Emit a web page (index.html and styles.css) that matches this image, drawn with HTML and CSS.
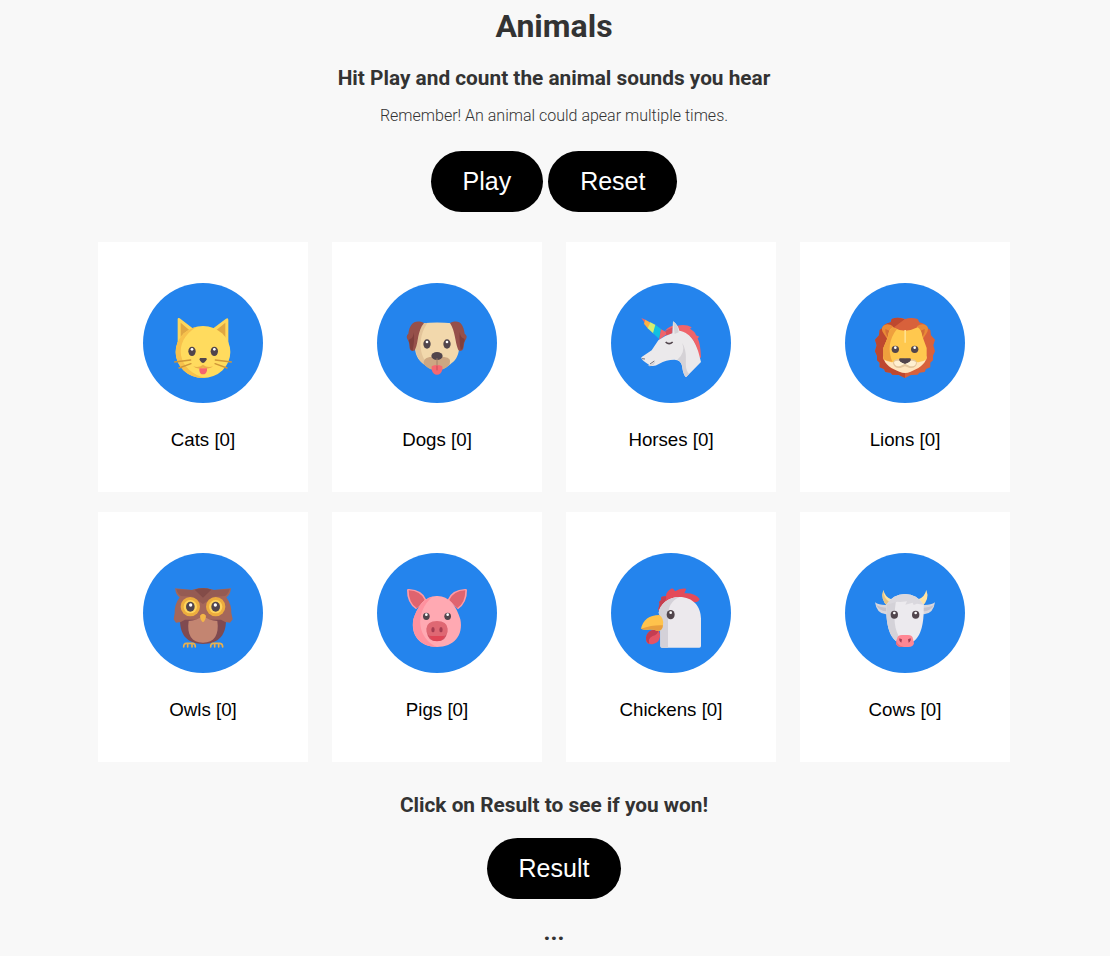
FILE: index.html
```html
<!DOCTYPE html>
<html lang="en">
<head>
<meta charset="utf-8">
<title>Animals</title>
<link rel="stylesheet" href="styles.css">
</head>
<body>
<main class="game">
  <h1 class="title">Animals</h1>
  <h2 class="lead">Hit Play and count the animal sounds you hear</h2>
  <p class="hint">Remember! An animal could apear multiple times.</p>
  <div class="actions">
    <button class="btn">Play</button>
    <button class="btn">Reset</button>
  </div>
  <section class="cards">
    <article class="card">
      <div class="avatar"><svg class="icon" viewBox="0 0 240 240">
        <path fill="#fdd65b" d="M44 130V49q0-6 6-3l41 31 60-1 38-29q7-4 7 4v79z"/>
        <path fill="#e0a742" d="M53 115V59l30 26zM187 115V59l-31 26z"/>
        <ellipse cx="120" cy="147" rx="82" ry="78" fill="#ffdb5e"/>
        <path fill="#f7c14c" d="M101 71C64 80 38 110 38 147c0 42 36 78 82 78h10C42 206 26 115 101 71z"/>
        <path fill="#ebad49" d="M91 190q17 5 29-5 12 10 30 5-8 10-30 4-21 6-29-4z"/>
        <path fill="#f7656e" d="M109 196h23v7q-3 11-12 11t-11-11z"/>
        <path fill="#51454c" d="M111 165h19q4 4-2 9-4 6-8 6t-8-6q-5-5-1-9z"/>
        <g stroke="#cf9638" stroke-width="4" stroke-linecap="round"><path d="M35 177l48-6M48 195l36-13M205 177l-48-6M192 195l-36-13"/></g>
        <g fill="#51454c"><ellipse cx="87" cy="145" rx="11" ry="14"/><ellipse cx="154" cy="145" rx="11" ry="14"/></g>
        <g fill="#fff"><circle cx="87" cy="139" r="4"/><circle cx="154" cy="139" r="4"/></g>
      </svg></div>
      <h3 class="name">Cats [0]</h3>
    </article>
    <article class="card">
      <div class="avatar"><svg class="icon" viewBox="0 0 240 240">
        <path fill="#f2d8ac" d="M76 61q44-5 89 0l22 45c2 48-6 64-31 81-20 18-52 18-71 0-26-18-32-32-32-75z"/>
        <path fill="#e3c49a" d="M91 60H77L54 105c-2 45 8 70 34 84l20 8C64 170 60 105 91 60z"/>
        <path fill="#96504a" d="M81 60c-28-12-43 3-47 32-6 5-6 10-2 18 6 7 5 22 7 29 4 7 15 6 16-1 10-20 5-53 26-78zM159 60c28-12 40 3 44 32 8 6 7 11 3 18-6 8-5 23-8 29-4 7-13 6-15 0-9-23-8-54-24-79z"/>
        <path fill="#803f3c" d="M38 108q11 0 12-20 4 20-3 55-7 0-8-8 0-14-4-22zM202 107q-11-1-14-20-2 22 3 54 6 0 7-8 0-14 5-20z"/>
        <path fill="#cda782" d="M81 184q-5-18 17-22h44q23 3 16 22c-20 25-57 25-77 0z"/>
        <path fill="#f66870" d="M104 190q16-8 32 0v10q-4 15-16 15t-16-15z"/>
        <path stroke="#c54d59" stroke-width="3" d="M120 189v13"/>
        <ellipse cx="120" cy="159" rx="17" ry="12" fill="#51454c"/><path d="M120 166v22" stroke="#a2806a" stroke-width="3"/>
        <g fill="#51454c"><ellipse cx="90" cy="123" rx="11" ry="14"/><ellipse cx="150" cy="123" rx="11" ry="14"/></g>
        <g fill="#fff"><circle cx="90" cy="117" r="4"/><circle cx="150" cy="117" r="4"/></g>
      </svg></div>
      <h3 class="name">Dogs [0]</h3>
    </article>
    <article class="card">
      <div class="avatar"><svg class="icon" viewBox="0 0 240 240">
        <path fill="#ef646b" d="M31 45l14 6-3 10z"/>
        <path fill="#ffb044" d="M43 50l16 9-7 19-13-16z"/>
        <path fill="#d6ed70" d="M58 58l16 8-6 26-18-16z"/>
        <path fill="#12bfe1" d="M73 65l18 14-7 28-18-16z"/>
        <path fill="#ef646b" d="M90 79l22 11-28 21z"/>
        <path fill="#ef646b" d="M101 84q17-18 38-16 25-6 43 5l-5 4q17 10 18 20l10 4-5 5q9 19 10 58l-24-2-53-90z"/>
        <path fill="#d94e5a" d="M104 84l21-11v18l-19 8zM145 84q48 9 58 72l-21-2z"/>
        <path fill="#ebe9eb" d="M126 55q15 10 19 28c38 6 55 45 65 94l-45 46q-9-8-12-34-3-18-23-19-25 0-45 12-14 9-27 6l-13-9q-14-7-14-16l31-21 20-30q21-15 42-21z"/>
        <path fill="#d5d2d6" d="M126 55q14 9 17 33l-12 5zM154 120q10 30-15 50 13 5 15 22 3 23 11 31l9-10c-20-26 2-52-20-93zM48 187q8 3 25-12-2 14-17 15z"/>
        <path d="M104 117q10 10 21 0" fill="none" stroke="#51454c" stroke-width="5"/>
        <path d="M33 167l9 1M57 183l13-9" stroke="#746f78" stroke-width="3"/>
      </svg></div>
      <h3 class="name">Horses [0]</h3>
    </article>
    <article class="card">
      <div class="avatar"><svg class="icon" viewBox="0 0 240 240">
        <path fill="#d8613b" d="M80 48q22-8 40 0 18-6 38 0l5 10q21 5 26 18l7 5 2 16 12 13-5 17 5 18-6 13v14l-8 7v14l-13 5-4 9-16 2-5 6-20 1-18 9-18-9-20-1-5-6-16-2-4-9-13-5v-14l-8-7V158l-6-13 5-18-5-17 12-13 2-16 7-5q5-13 26-18z"/>
        <path fill="#be482f" d="M119 49q-21-9-39-1l-3 10q-21 5-26 18l-7 5-2 16-12 13 5 17-5 18 6 13v14l8 7v14l13 5 4 9 16 2 5 6 20 1 18 9V203l-53-30 17-98z"/>
        <path fill="#e98a37" d="M84 70c-18-15-43-2-29 20l14 22zM156 70c18-15 43-2 29 20l-14 22z"/>
        <path fill="#d36c35" d="M77 85l-16-7q-1 16 10 25zM163 85l16-7q1 16-10 25z"/>
        <path fill="#ffe5bd" d="M55 161q27-21 65 0 38-21 65 0c-3 25-28 36-48 45q-17 8-34 0c-22-9-45-20-48-45z"/>
        <path fill="#ffc84e" d="M83 73q37 20 75 0 12 7 14 27l13 35v34q-20 15-47 4l-18-7-18 7q-27 11-47-4v-34l14-34q2-21 14-28z"/>
        <path fill="#efa03d" d="M83 73q-12 7-14 28l-14 34v34q12 6 27 7c-14-34-10-68 14-98z"/>
        <path fill="#ffe08c" d="M118 81h5v38h-5z"/>
        <path fill="#e4c79e" d="M84 181q0-14 23-13h26q23 0 23 13-3 16-22 14l-14-5-14 5q-19 2-22-14z"/>
        <path fill="#fff0d1" d="M87 177q6-6 20-3l13 8 13-8q15-3 20 4 0 15-19 11l-14-7-14 7q-18 3-19-12z"/>
        <path fill="#51454c" d="M104 166h32q5 6-5 12l-11 5-11-5q-10-6-5-12z"/>
        <g fill="#51454c"><circle cx="91" cy="139" r="11"/><circle cx="149" cy="139" r="11"/></g>
        <g fill="#fff"><circle cx="91" cy="134" r="4"/><circle cx="149" cy="134" r="4"/></g>
      </svg></div>
      <h3 class="name">Lions [0]</h3>
    </article>
    <article class="card">
      <div class="avatar"><svg class="icon" viewBox="0 0 240 240">
        <path fill="#804a50" d="M52 130h136c6 57-23 83-68 83s-74-26-68-83z"/>
        <path fill="#a5675a" d="M36 46l51 5q33-12 66 0l51-5q-3 22-14 27 16 22 15 47l4 19-8 10q-15 0-27-9H66q-12 9-27 9l-7-10 3-19q-1-25 15-47-11-5-14-27z"/>
        <path fill="#955b53" d="M87 51l-47-2q5 16 14 20l34 2 32 22 32-22 34-2q9-4 14-20l-48 2q-32-11-65 0z"/>
        <path fill="#834c48" d="M95 50q25-8 50 0l-25 24z"/>
        <path fill="#c38571" d="M77 144q25-2 43-16 18 14 43 16c6 41-9 65-43 65s-49-24-43-65z"/>
        <g fill="#edad3e"><circle cx="82" cy="101" r="29"/><circle cx="158" cy="101" r="29"/></g>
        <g fill="#ffd45b"><circle cx="82" cy="101" r="20"/><circle cx="158" cy="101" r="20"/></g>
        <g fill="#51454c"><ellipse cx="82" cy="101" rx="13" ry="15"/><ellipse cx="158" cy="101" rx="13" ry="15"/></g>
        <g fill="#fff"><circle cx="83" cy="96" r="5"/><circle cx="157" cy="96" r="5"/></g>
        <path fill="#f4b647" d="M111 128q9-11 18 0-1 14-9 20-8-6-9-20z"/>
        <path d="M62 222q0-11 8-11h20q7 1 7 11M74 212v10M87 212v10M143 222q0-11 8-11h20q8 1 8 11M155 212v10M167 212v10" fill="none" stroke="#ebaf4b" stroke-width="5" stroke-linecap="round"/>
      </svg></div>
      <h3 class="name">Owls [0]</h3>
    </article>
    <article class="card">
      <div class="avatar"><svg class="icon" viewBox="0 0 240 240">
        <path fill="#ff9ba5" d="M30 51q0-4 6-3 40 2 52 32l-31 29q-28-20-27-58zM210 51q0-4-6-3-40 2-52 32l31 29q28-20 27-58z"/>
        <path fill="#df646f" d="M35 52q36 2 48 29l-23 25q-25-15-25-54zM205 52q-36 2-48 29l23 25q25-15 25-54z"/>
        <path fill="#ffa9b2" d="M120 69c35-1 59 31 70 70 10 49-20 83-70 83S40 188 49 139c12-39 36-71 71-70z"/>
        <path fill="#ff929f" d="M106 71c-28 8-47 35-57 68-8 49 21 82 71 83C62 197 50 121 106 71z"/>
        <path fill="#cf5263" d="M90 177h60q-2 28-30 28t-30-28z"/>
        <path fill="#df4555" d="M99 189h42q-2 15-21 15t-21-15z"/>
        <path fill="#df6873" d="M88 167q2-23 32-23t32 23q2 22-16 22h-32q-17 0-16-22z"/>
        <g fill="#a63d51"><ellipse cx="108" cy="170" rx="5" ry="8"/><ellipse cx="132" cy="170" rx="5" ry="8"/></g>
        <g fill="#51454c"><ellipse cx="88" cy="130" rx="10" ry="11"/><ellipse cx="152" cy="130" rx="10" ry="11"/></g>
        <g fill="#fff"><circle cx="88" cy="125" r="4"/><circle cx="152" cy="125" r="4"/></g>
      </svg></div>
      <h3 class="name">Pigs [0]</h3>
    </article>
    <article class="card">
      <div class="avatar"><svg class="icon" viewBox="0 0 240 240">
        <path fill="#e44b59" d="M81 112l5-20-2-5 6-5 1-10q7-3 14-2-1-14 18-24 7 3 9 9 16-11 34-8l-6 14q32-2 46 17-4 10-14 10l-40 2-40 20z"/>
        <path fill="#c53f50" d="M81 112l5-20-2-5 6-5 1-10q7-3 14-2 3 8-6 20z"/>
        <path fill="#ece9ed" d="M83 120c2-25 30-48 62-48 41 0 65 29 65 65v82q0 5-5 5H93q-5 0-5-5v-88z"/>
        <path fill="#d4d1d8" d="M83 120c2-25 30-48 62-48q-35 16-34 60v92H93q-5 0-5-5v-88z"/>
        <path fill="#e45465" d="M78 167q10 10 9 25-3 18-23 22-21 1-19-20 3-18 18-22z"/>
        <path fill="#c43d51" d="M63 172q-16 5-18 22 0 14 10 19-6-16 10-24 15-3 18-17l-5-5z"/>
        <path fill="#ffc34c" d="M30 167q9-40 55-41 14 10 11 29-2 19-16 19-13-5-29-4-14 1-21-3z"/>
        <path fill="#e89e3d" d="M30 167q36-12 66-10-2 17-16 17-13-5-29-4-14 1-21-3z"/>
        <ellipse cx="119" cy="125" rx="12" ry="14" fill="#51454c"/><circle cx="119" cy="119" r="4" fill="#fff"/>
      </svg></div>
      <h3 class="name">Chickens [0]</h3>
    </article>
    <article class="card">
      <div class="avatar"><svg class="icon" viewBox="0 0 240 240">
        <path fill="#ffe3a2" d="M55 51q6 23 24 28l-10 23q-24-23-14-51zM184 51q-6 23-24 28l10 23q25-23 14-51z"/>
        <path fill="#e5c486" d="M55 51q0 26 20 37l-6 14q-24-23-14-51z"/>
        <path fill="#d9d7dd" d="M30 88q13 10 40 8v27q-34 5-40-35zM210 88q-13 10-40 8v27q34 5 40-35z"/>
        <path fill="#c6c3cc" d="M33 96q17 9 34 9v10q-22 1-34-19zM207 96q-17 9-34 9v10q22 1 34-19z"/>
        <path fill="#eceaee" d="M64 95q20-32 56-32t56 32c2 65-12 100-34 112H98C76 195 62 160 64 95z"/>
        <path fill="#d4d2d8" d="M96 70q-20 8-32 25c-2 65 12 100 34 112l10-6c-22-33-22-65-16-111z"/>
        <path fill="#dad8de" d="M64 95q20-32 56-32t56 32l-20-3-10 4-3-7-22 6 5-10-20 2-9-1z"/>
        <path fill="#ff8794" d="M96 198q1-12 15-12h18q14 0 15 12l3 13q-2 11-17 11h-20q-15 0-17-11z"/>
        <path fill="#e96d7c" d="M96 198q-4 19 21 24h-7q-15 0-17-11z"/>
        <g fill="#a73f55"><path d="M103 196l8 3-2 10q-8-4-6-13zM137 196l-8 3 2 10q8-4 6-13z"/></g>
        <g fill="#51454c"><ellipse cx="88" cy="125" rx="11" ry="12"/><ellipse cx="152" cy="125" rx="11" ry="12"/></g>
        <g fill="#fff"><circle cx="88" cy="120" r="4"/><circle cx="152" cy="120" r="4"/></g>
      </svg></div>
      <h3 class="name">Cows [0]</h3>
    </article>
  </section>
  <h2 class="prompt">Click on Result to see if you won!</h2>
  <button class="btn">Result</button>
  <h2 class="outcome">...</h2>
</main>
</body>
</html>
```
FILE: styles.css
```css
body {
  margin: 0;
  background: #f8f8f8;
  color: #333;
  font-family: Roboto, sans-serif;
}
.game {
  width: 1108px;
  height: 956px;
  overflow: hidden;
  display: flex;
  flex-direction: column;
  align-items: center;
}
.title {
  margin: 7px 0 0;
  font-size: 32px;
  line-height: 38px;
  font-weight: 700;
}
.lead {
  margin: 21px 0 0;
  font-size: 20.8px;
  line-height: 25px;
}
.hint {
  margin: 15px 0 0;
  font-size: 16px;
  line-height: 19px;
  font-weight: 300;
}
.actions {
  margin-top: 26px;
  display: flex;
  gap: 5px;
}
.btn {
  border: 0;
  border-radius: 32px;
  padding: 16px 32px;
  height: 61px;
  background: #000;
  color: #fff;
  font: 25px/29px "Liberation Sans", Arial, sans-serif;
}
.cards {
  margin-top: 30px;
  display: grid;
  grid-template-columns: repeat(4, 210px);
  grid-auto-rows: 250px;
  gap: 20px 24px;
}
.card {
  background: #fff;
  display: flex;
  flex-direction: column;
  align-items: center;
  padding-top: 41px;
  box-sizing: border-box;
}
.avatar {
  width: 120px;
  height: 120px;
  border-radius: 50%;
  background: #2484ed;
  display: flex;
  align-items: center;
  justify-content: center;
}
.icon {
  width: 80px;
  height: 80px;
}
.name {
  margin: 26px 0 0;
  color: #000;
  font: 400 18.72px/22px "Liberation Sans", Arial, sans-serif;
}
.prompt {
  margin: 31px 0 20px;
  font-size: 20.8px;
  line-height: 25px;
}
.outcome {
  margin: 19px 0 0;
  font-size: 24px;
  line-height: 28px;
}
```
